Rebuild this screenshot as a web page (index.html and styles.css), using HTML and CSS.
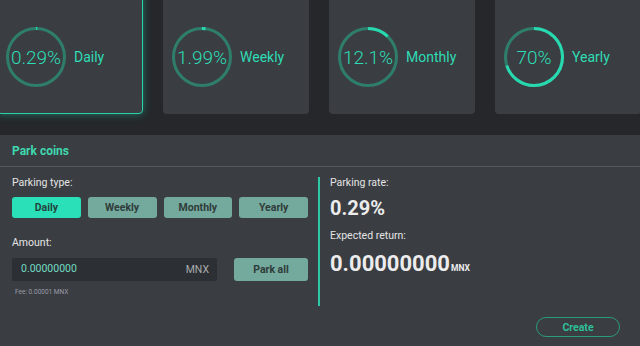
FILE: index.html
```html
<!DOCTYPE html>
<html>
    <head>
        <title>Park coins</title>
        <link rel="stylesheet" href="styles.css">
    </head>
    <body>
        <div class="rates">
            <div class="rate rate_activa">
                <div class="anillo">
                    <svg viewBox="0 0 60 60" width="60" height="60">
                        <circle class="pista" cx="30" cy="30" r="28.5"/>
                        <circle class="avance" cx="30" cy="30" r="28.5" stroke-dasharray="1.2 179"/>
                    </svg>
                    <span class="valor">0.29%</span>
                </div>
                <span class="nombre">Daily</span>
            </div>
            <div class="rate">
                <div class="anillo">
                    <svg viewBox="0 0 60 60" width="60" height="60">
                        <circle class="pista" cx="30" cy="30" r="28.5"/>
                        <circle class="avance" cx="30" cy="30" r="28.5" stroke-dasharray="3.6 179"/>
                    </svg>
                    <span class="valor">1.99%</span>
                </div>
                <span class="nombre">Weekly</span>
            </div>
            <div class="rate">
                <div class="anillo">
                    <svg viewBox="0 0 60 60" width="60" height="60">
                        <circle class="pista" cx="30" cy="30" r="28.5"/>
                        <circle class="avance" cx="30" cy="30" r="28.5" stroke-dasharray="21.7 179"/>
                    </svg>
                    <span class="valor">12.1%</span>
                </div>
                <span class="nombre">Monthly</span>
            </div>
            <div class="rate">
                <div class="anillo">
                    <svg viewBox="0 0 60 60" width="60" height="60">
                        <circle class="pista" cx="30" cy="30" r="28.5"/>
                        <circle class="avance" cx="30" cy="30" r="28.5" stroke-dasharray="125.3 179"/>
                    </svg>
                    <span class="valor">70%</span>
                </div>
                <span class="nombre">Yearly</span>
            </div>
        </div>

        <section class="park">
            <h2 class="park_titulo">Park coins</h2>
            <div class="park_cuerpo">
                <div class="park_form">
                    <div class="etiqueta">Parking type:</div>
                    <div class="tipos">
                        <button type="button" class="tipo tipo_activo">Daily</button>
                        <button type="button" class="tipo">Weekly</button>
                        <button type="button" class="tipo">Monthly</button>
                        <button type="button" class="tipo">Yearly</button>
                    </div>
                    <div class="etiqueta etiqueta_monto">Amount:</div>
                    <div class="fila_monto">
                        <div class="monto">
                            <span class="monto_valor">0.00000000</span>
                            <span class="monto_moneda">MNX</span>
                        </div>
                        <button type="button" class="tipo park_all">Park all</button>
                    </div>
                    <div class="fee">Fee: 0.00001 MNX</div>
                </div>
                <div class="park_resumen">
                    <div class="etiqueta">Parking rate:</div>
                    <div class="tasa">0.29%</div>
                    <div class="etiqueta etiqueta_retorno">Expected return:</div>
                    <div class="retorno">0.00000000<span class="retorno_moneda">MNX</span></div>
                </div>
            </div>
            <div class="park_pie">
                <button type="button" class="crear">Create</button>
            </div>
        </section>
    </body>
</html>
```

FILE: styles.css
```css
html, body{
    margin: 0;
    height: 100%;
    overflow: hidden;
}
body{
    background: #25272b;
    font-family: Roboto, "Liberation Sans", sans-serif;
    color: #e2e2e2;
}
.rates{
    display: flex;
    gap: 20px;
    margin: -6px 0 0 -3px;
    height: 120px;
}
.rate{
    flex: 0 0 146px;
    height: 120px;
    box-sizing: border-box;
    padding: 6px 0 0 9px;
    background: #3a3d42;
    border-radius: 4px;
    display: flex;
    align-items: center;
    gap: 8px;
}
.rate_activa{
    border: 1px solid #2ad3ab;
    padding-left: 8px;
    box-shadow: 0 0 9px rgba(38, 214, 172, 0.45);
}
.anillo{
    display: grid;
    width: 60px;
    height: 60px;
}
.anillo svg, .anillo .valor{
    grid-area: 1 / 1;
}
.anillo svg{
    transform: rotate(-90deg);
}
.pista, .avance{
    fill: none;
    stroke-width: 3;
}
.pista{
    stroke: #2e7e6b;
}
.avance{
    stroke: #28d9b0;
}
.valor{
    align-self: center;
    justify-self: center;
    font-size: 19px;
    font-weight: 300;
    color: #2edcb5;
}
.nombre{
    font-size: 14px;
    color: #2edcb5;
}
.park{
    margin-top: 21px;
    background: #3a3d42;
    height: 211px;
}
.park_titulo{
    margin: 0;
    height: 31px;
    line-height: 32px;
    padding: 0 12px;
    font-size: 12px;
    font-weight: bold;
    color: #3fd8af;
    border-bottom: 1px solid #55585d;
}
.park_cuerpo{
    display: flex;
    padding: 10px 12px 0;
}
.park_form{
    width: 296px;
    margin-right: 10px;
}
.etiqueta{
    font-size: 10.5px;
    line-height: 12px;
    color: #e4e4e4;
}
.tipos{
    display: flex;
    gap: 7px;
    margin-top: 8px;
}
.tipo{
    width: 69px;
    height: 21px;
    padding: 0;
    border: none;
    border-radius: 3px;
    background: #74a99d;
    color: #2f3c3a;
    font-family: inherit;
    font-size: 10.5px;
    font-weight: bold;
}
.tipo_activo{
    background: #2ae0b9;
    color: #24453d;
}
.etiqueta_monto{
    margin-top: 19px;
}
.fila_monto{
    display: flex;
    justify-content: space-between;
    margin-top: 9px;
}
.monto{
    width: 205px;
    height: 23px;
    box-sizing: border-box;
    padding: 0 8px 0 9px;
    background: #2c2f33;
    border-radius: 2px;
    display: flex;
    align-items: center;
    justify-content: space-between;
    font-size: 10.5px;
}
.monto_valor{
    color: #73dcc4;
    margin-top: -3px;
}
.monto_moneda{
    color: #a9abad;
}
.park_all{
    width: 74px;
    height: 23px;
}
.fee{
    margin: 7px 0 0 3px;
    font-size: 6.5px;
    line-height: 9px;
    color: #9a9ba8;
}
.park_resumen{
    height: 129px;
    border-left: 2px solid #2bc9a5;
    padding-left: 10px;
}
.tasa{
    margin-top: 7px;
    font-size: 20px;
    line-height: 24px;
    font-weight: bold;
    color: #ececec;
}
.etiqueta_retorno{
    margin-top: 10px;
}
.retorno{
    margin-top: 8px;
    font-size: 22px;
    line-height: 28px;
    font-weight: bold;
    color: #ececec;
}
.retorno_moneda{
    font-size: 8.5px;
    margin-left: 1px;
}
.park_pie{
    display: flex;
    justify-content: flex-end;
    padding: 11px 20px 0;
}
.crear{
    width: 84px;
    height: 20px;
    padding: 0;
    background: none;
    border: 1.5px solid #2a9c7e;
    border-radius: 10px;
    color: #2fbf98;
    font-family: inherit;
    font-size: 10.5px;
    font-weight: bold;
}
```
